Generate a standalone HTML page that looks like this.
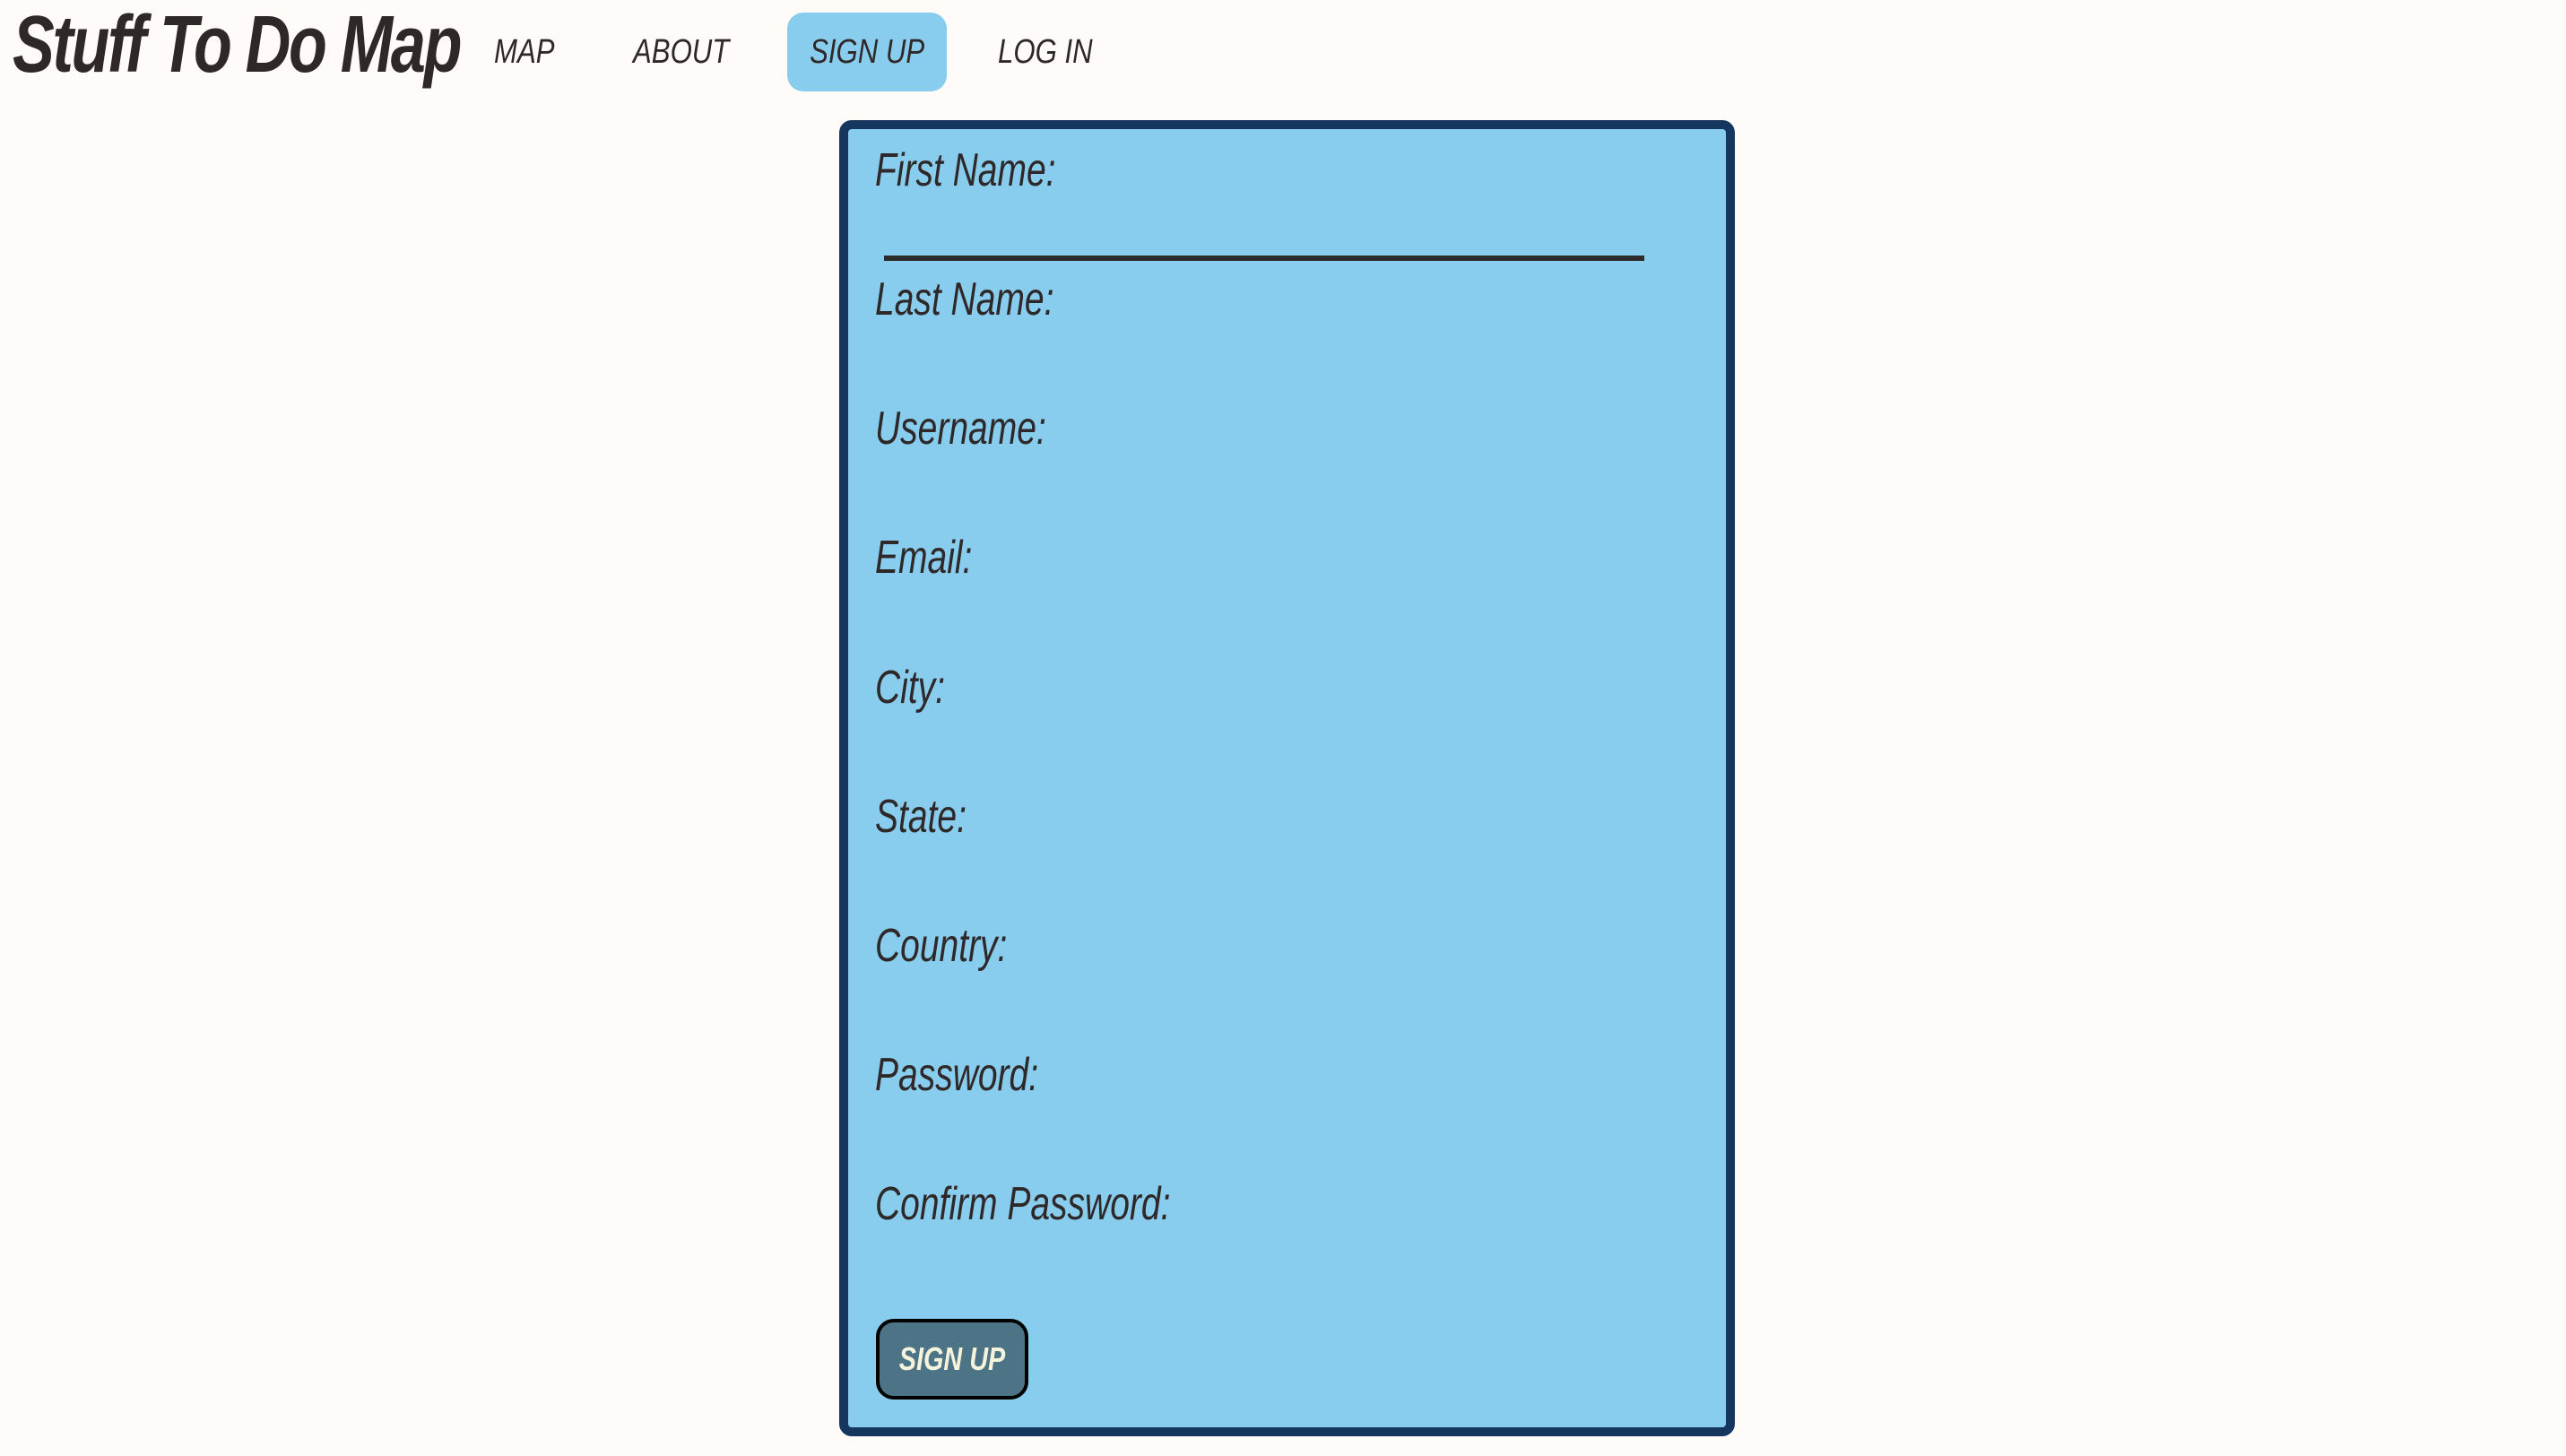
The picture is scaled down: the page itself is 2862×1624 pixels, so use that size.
<!DOCTYPE html>
<html><head><meta charset="utf-8"><style>
html,body{margin:0;padding:0;}
body{width:2862px;height:1624px;background:#fffbf8;position:relative;overflow:hidden;color:#2f2828;font-family:"Liberation Sans",sans-serif;font-style:italic;}
.c{display:inline-block;transform:scaleX(0.75);transform-origin:left center;}
#title{position:absolute;left:14px;top:0px;font-size:90px;font-weight:bold;line-height:100px;letter-spacing:-3px;white-space:nowrap;transform:scaleX(0.78);transform-origin:left center;}
.nav{position:absolute;top:14px;height:88px;line-height:88px;font-size:38px;white-space:nowrap;transform:scaleX(0.82);transform-origin:left center;}
#su{position:absolute;left:878px;top:14px;width:178px;height:88px;line-height:88px;background:#88cdee;border-radius:18px;text-align:center;font-size:38px;}
#su span{display:inline-block;transform:scaleX(0.82);}
#card{position:absolute;left:936px;top:134px;width:979px;height:1448px;border:10px solid #14365f;border-radius:14px;background:#88cdee;}
.lab{position:absolute;left:30px;font-size:52px;line-height:60px;white-space:nowrap;transform:scaleX(0.75);transform-origin:left center;}
#line{position:absolute;left:40px;top:141px;width:848px;height:6px;background:#2d2a2a;}
#btn{position:absolute;left:31px;top:1327px;width:162px;height:82px;border:4px solid #000;border-radius:20px;background:#4d7386;color:#f5f3dc;font-weight:bold;font-size:36px;line-height:82px;text-align:center;}
#btn span{display:inline-block;transform:scaleX(0.8);}
</style></head><body>
<div id="title">Stuff To Do Map</div>
<div class="nav" style="left:551px">MAP</div>
<div class="nav" style="left:706px">ABOUT</div>
<div id="su"><span>SIGN UP</span></div>
<div class="nav" style="left:1113px">LOG IN</div>
<div id="card">
<div class="lab" style="top:16px">First Name:</div>
<div id="line"></div>
<div class="lab" style="top:160px">Last Name:</div>
<div class="lab" style="top:304px">Username:</div>
<div class="lab" style="top:448px">Email:</div>
<div class="lab" style="top:593px">City:</div>
<div class="lab" style="top:737px">State:</div>
<div class="lab" style="top:881px">Country:</div>
<div class="lab" style="top:1025px">Password:</div>
<div class="lab" style="top:1169px">Confirm Password:</div>
<div id="btn"><span>SIGN UP</span></div>
</div>
</body></html>
